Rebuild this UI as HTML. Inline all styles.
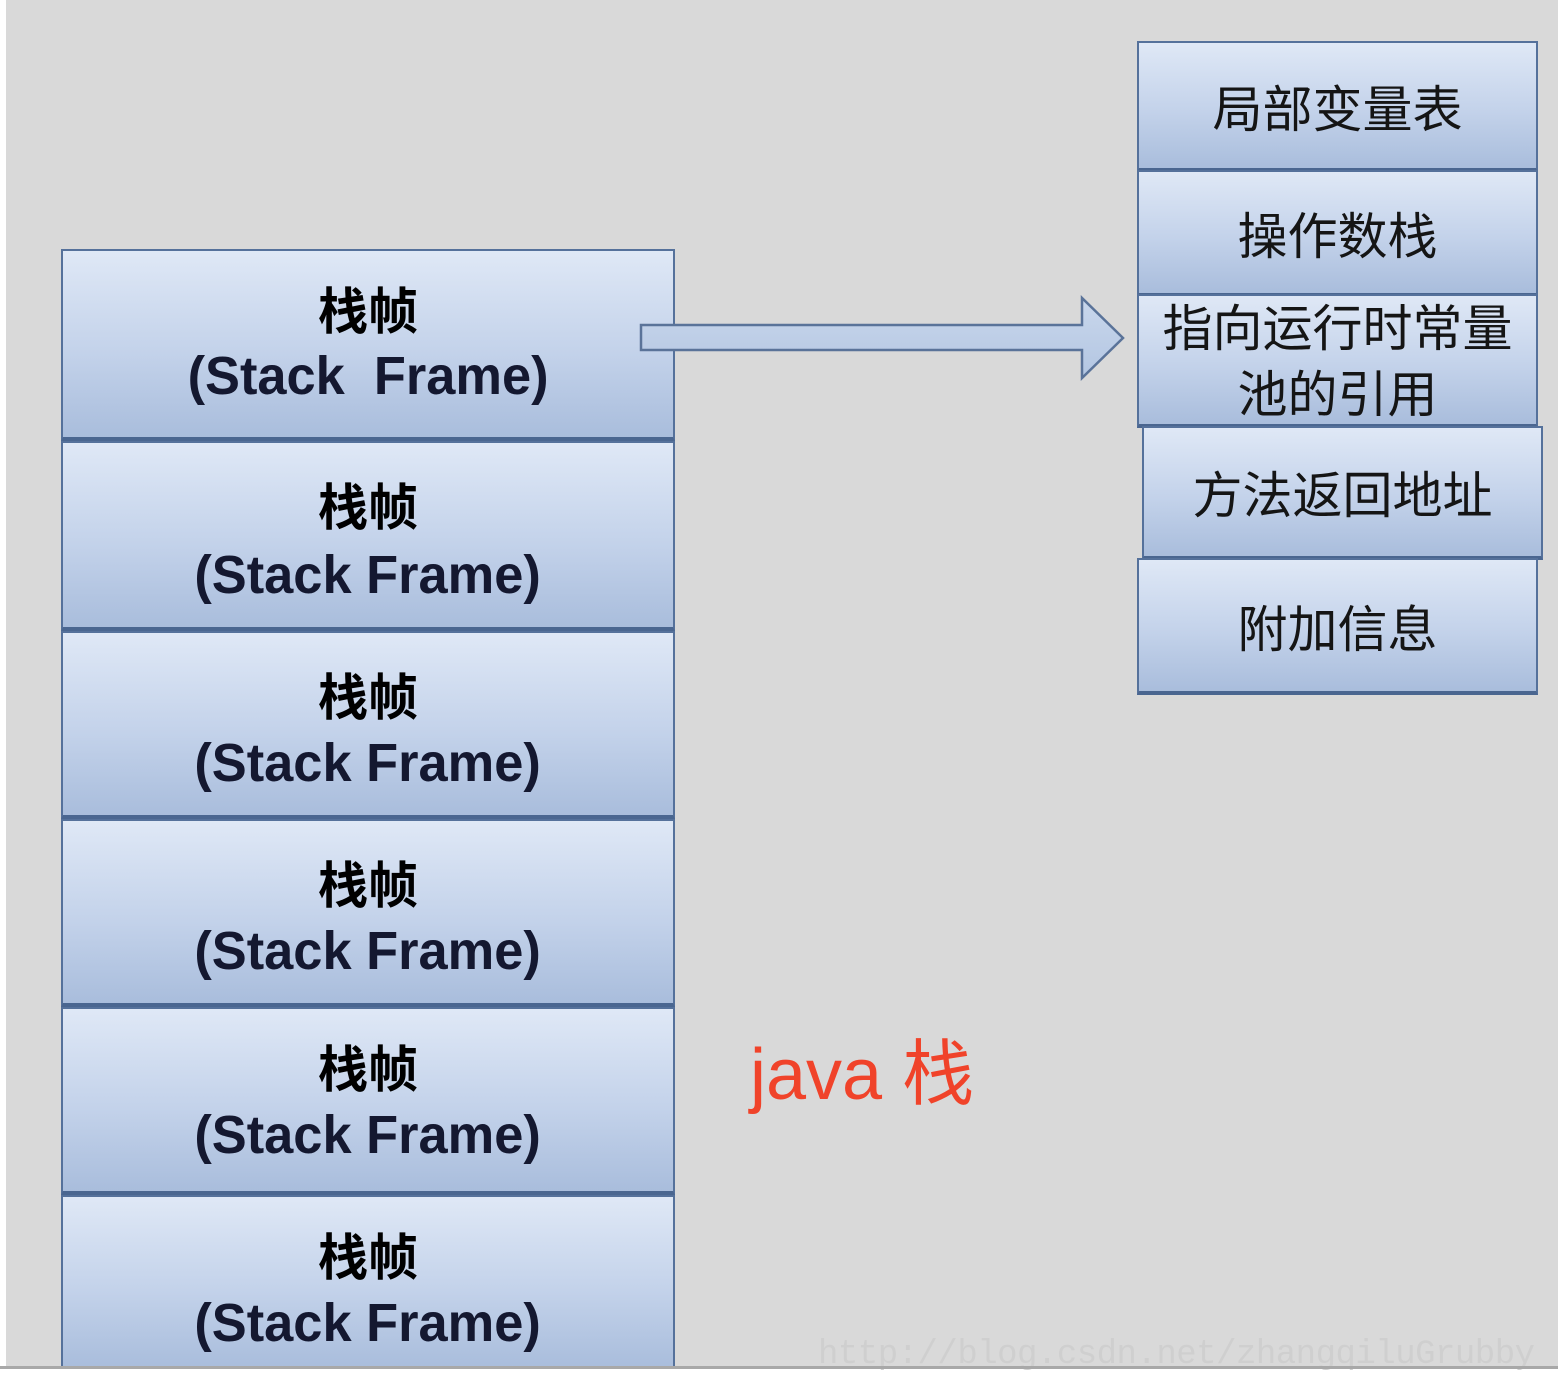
<!DOCTYPE html>
<html><head><meta charset="utf-8">
<style>
html,body{margin:0;padding:0}
body{width:1558px;height:1374px;position:relative;background:#fff;overflow:hidden;font-family:"Liberation Sans","Noto Sans CJK SC",sans-serif}
#bg{position:absolute;left:6px;top:0;width:1552px;height:1366px;background:#d9d9d9}
#line{position:absolute;left:0;top:1366px;width:1558px;height:3px;background:#a8a8a8}
.box{position:absolute;box-sizing:border-box;border:2px solid #55719b;border-bottom:4px solid #4a6690;background:linear-gradient(#dfe8f6,#c3d2ea 55%,#a9bddc);text-align:center;color:#111}
.sf .t1{position:absolute;left:0;right:0;font-size:50px;font-weight:bold;line-height:50px;font-family:"Noto Sans CJK SC",sans-serif;color:#000}
.sf .t2{position:absolute;left:0;right:0;font-size:54px;line-height:56px;font-weight:bold;color:#141830}
.sf .t2 span{display:inline-block;transform:scaleX(0.97)}
.r{display:flex;align-items:center;justify-content:center;font-size:50px;font-family:"Noto Sans CJK SC",sans-serif;line-height:64px;color:#151515}
#java{position:absolute;left:750px;top:1030px;font-size:72px;color:#f0432a;font-family:"Liberation Sans","Noto Sans CJK SC",sans-serif;line-height:90px}
#wm{position:absolute;left:818px;top:1336px;font-family:"Liberation Mono",monospace;font-size:34px;color:#cfcfcf;letter-spacing:-0.5px}
</style></head><body>
<div id="bg"></div>
<div id="wm">http://blog.csdn.net/zhangqiluGrubby</div>

<div class="box sf" style="left:61px;top:249px;width:614px;height:192px"><div class="t1" style="top:32px">栈帧</div><div class="t2" style="top:97px"><span>(Stack&nbsp; Frame)</span></div></div>
<div class="box sf" style="left:61px;top:441px;width:614px;height:190px"><div class="t1" style="top:36px">栈帧</div><div class="t2" style="top:104px"><span>(Stack Frame)</span></div></div>
<div class="box sf" style="left:61px;top:631px;width:614px;height:188px"><div class="t1" style="top:36px">栈帧</div><div class="t2" style="top:102px"><span>(Stack Frame)</span></div></div>
<div class="box sf" style="left:61px;top:819px;width:614px;height:188px"><div class="t1" style="top:36px">栈帧</div><div class="t2" style="top:102px"><span>(Stack Frame)</span></div></div>
<div class="box sf" style="left:61px;top:1007px;width:614px;height:188px"><div class="t1" style="top:32px">栈帧</div><div class="t2" style="top:98px"><span>(Stack Frame)</span></div></div>
<div class="box sf" style="left:61px;top:1195px;width:614px;height:172px;border-bottom:none"><div class="t1" style="top:32px">栈帧</div><div class="t2" style="top:98px"><span>(Stack Frame)</span></div></div>

<svg style="position:absolute;left:0;top:0" width="1558" height="1374">
<defs><linearGradient id="ag" x1="0" y1="0" x2="0" y2="1"><stop offset="0" stop-color="#c9d7ec"/><stop offset="1" stop-color="#b3c6e2"/></linearGradient></defs>
<path d="M641 325 H1082 V298 L1123 338 L1082 378 V350 H641 Z" fill="url(#ag)" stroke="#5a7399" stroke-width="2.5"/>
</svg>

<div class="box r" style="left:1137px;top:41px;width:401px;height:131px">局部变量表</div>
<div class="box r" style="left:1137px;top:170px;width:401px;height:127px">操作数栈</div>
<div class="box r" style="left:1137px;top:294px;width:401px;height:134px;line-height:66px;padding-bottom:4px">指向运行时常量<br>池的引用</div>
<div class="box r" style="left:1142px;top:426px;width:401px;height:134px">方法返回地址</div>
<div class="box r" style="left:1137px;top:558px;width:401px;height:137px">附加信息</div>

<div id="java">java 栈</div>
<div id="line"></div>
</body></html>
